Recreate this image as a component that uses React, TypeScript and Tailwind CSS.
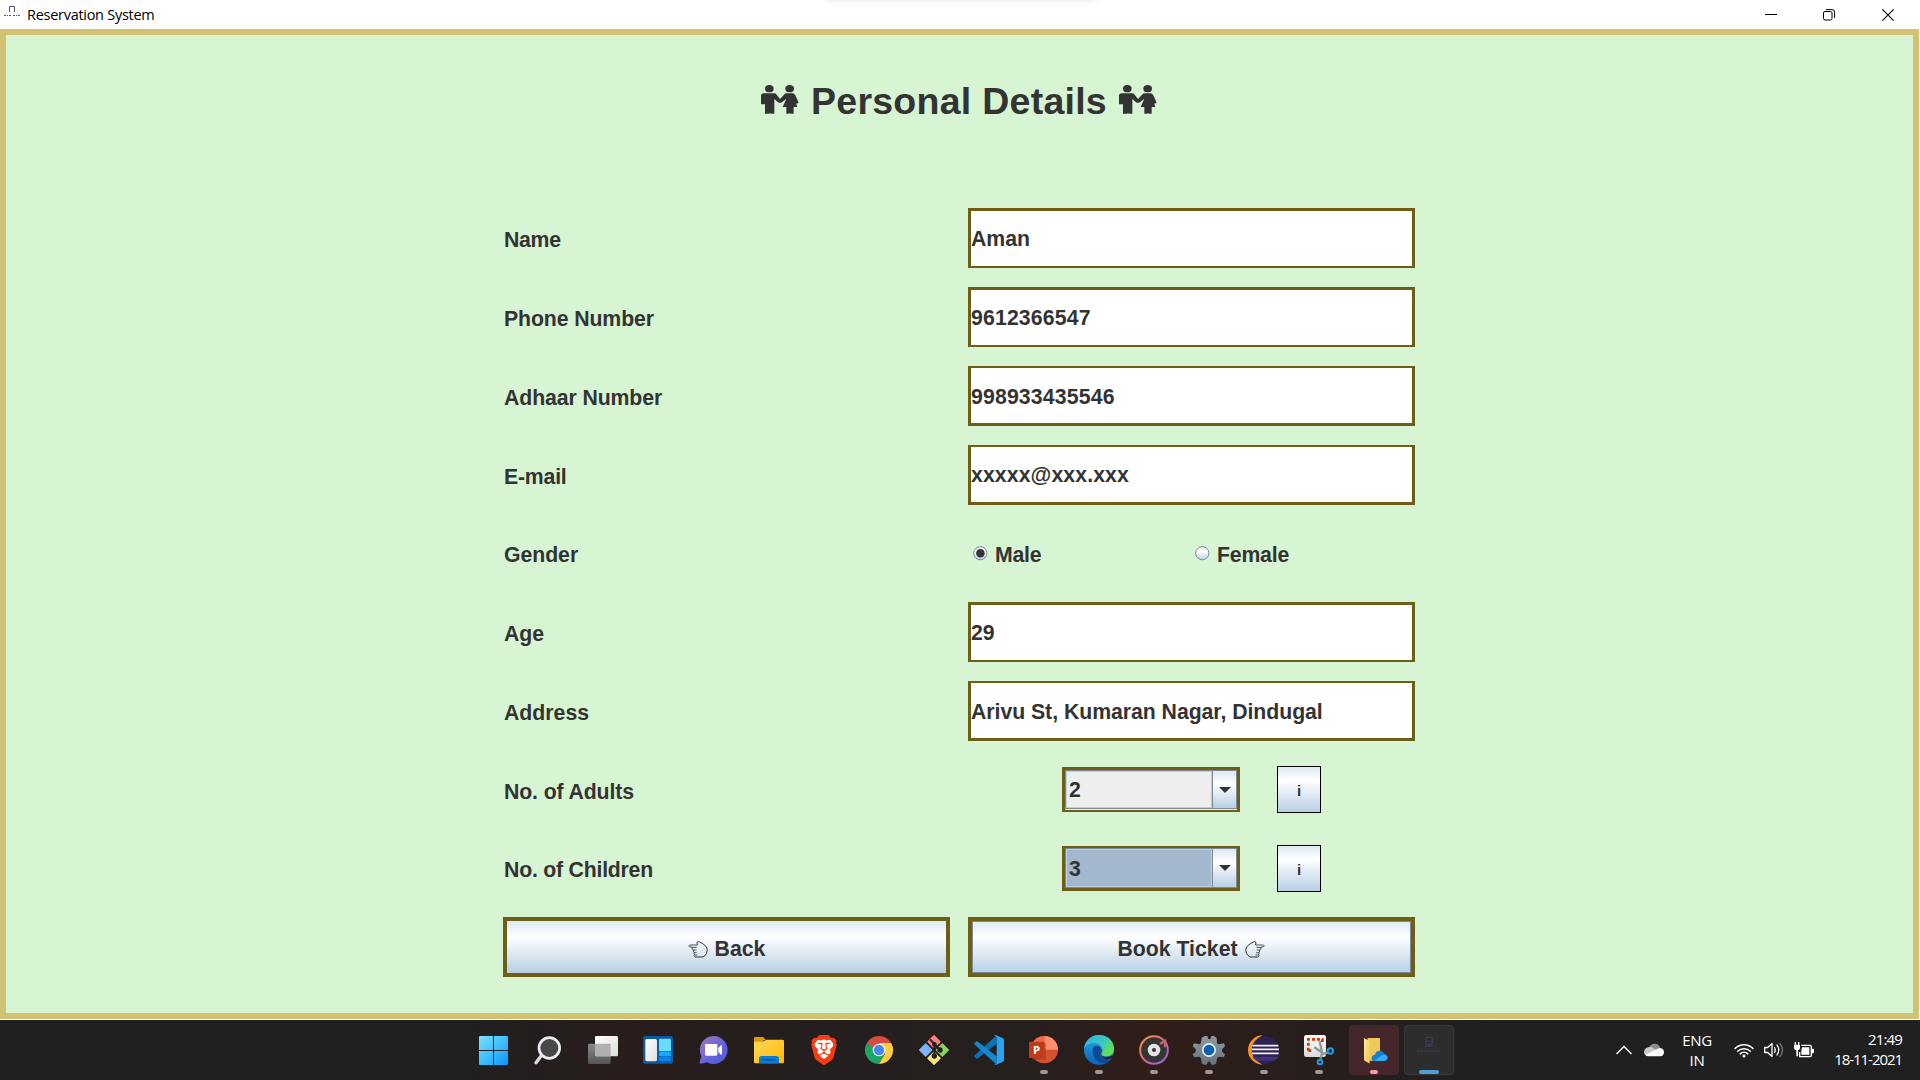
import type { ReactNode } from "react";
import { SiBrave } from "react-icons/si";

const labelCls = "text-[21.25px] leading-[24px] font-bold text-[#333333]";

function Couple() {
  return (
    <svg className="h-[30px] w-[38px] shrink-0" viewBox="0 0 114 90" fill="#333333">
      <ellipse cx="25" cy="11" rx="13" ry="11" />
      <ellipse cx="86" cy="11" rx="13" ry="11" />
      <path d="M8 25h32q4 0 7 4l10 13 12-13q4-4 8-4h18q5 0 8 6l10 22-6 3-2-2 4 12H98v20H89l-2-3-2 3H76V66H65l11-25-13 11q-6 3-12 0l-11-10V86H29l-2-3-2 3H12V58H0V33q0-8 8-8z" />
    </svg>
  );
}

function Hand({ flip = false }: { flip?: boolean }) {
  return (
    <svg className={flip ? "h-[17px] w-[20px] shrink-0 -scale-x-100" : "h-[17px] w-[20px] shrink-0"} viewBox="0 0 60 51" fill="none" stroke="#333333" strokeWidth="3">
      <path d="M28 12H5q-4 2-1 5l8 2h14" strokeWidth="2.5" />
      <path d="M28 12l-1-8q3-4 8-1l9 5q9 5 13 13 2 8-2 17-3 6-10 10H22q-4-1-4-5" />
      <path d="M12 19q0 8 4 8h9M16 27q-1 8 4 8h6M18 35q-1 7 4 7h6" strokeWidth="2.5" />
    </svg>
  );
}

function Row({ label, track, h = "h-[60px]", children }: { label: string; track: string; h?: string; children: ReactNode }) {
  return (
    <div className={`grid grid-cols-[447px_447px] gap-[18px] ${h}`}>
      <div className={`pl-px ${labelCls} ${track}`}>{label}</div>
      {children}
    </div>
  );
}

function Field({ value, look }: { value: string; look: string }) {
  return <div className={`border-x-[3px] border-[#6f5e16] bg-white ${labelCls} ${look}`}>{value}</div>;
}

function Radio({ label, on = false }: { label: string; on?: boolean }) {
  return (
    <div className="flex items-center pt-[3px] pl-[5px]">
      <svg className="-mt-[4px] mr-[7px] h-[15px] w-[15px]" viewBox="0 0 15 15">
        <defs>
          <linearGradient id="radio" x1="0" y1="0" x2="0" y2="1">
            <stop offset="0" stopColor="#dde8f3" />
            <stop offset=".35" stopColor="#ffffff" />
            <stop offset="1" stopColor="#b8cfe5" />
          </linearGradient>
        </defs>
        <circle cx="7.3" cy="7.2" r="6.6" fill="url(#radio)" stroke="#7a8a99" />
        {on && <circle cx="7.4" cy="7.2" r="4.3" fill="#333333" />}
      </svg>
      <span className={`tracking-[-0.2px] ${labelCls}`}>{label}</span>
    </div>
  );
}

function Combo({ value, focused = false }: { value: string; focused?: boolean }) {
  return (
    <div className="grid grid-cols-[94px_178px_37px_44px] items-start">
      <span />
      <div className={`mt-[7px] flex h-[45px] border-x-[3px] border-[#6f5e16] bg-[#e8eef4] ${focused ? "border-t-2 border-b-[3px]" : "border-t-[3px] border-b-2"}`}>
        <div className={`flex flex-1 border border-[#7a8a99] ${focused ? "" : "mb-px"}`}>
          <div className={`flex flex-1 items-center border border-[#b8cfe5] pl-[2px] ${labelCls} ${focused ? "bg-[#a3b8cc] pt-[2px]" : "bg-[#eeeeee] pt-px"}`}>{value}</div>
          <div className="flex w-[24px] items-center justify-center border-l border-[#7a8a99] bg-[linear-gradient(#dde8f3,#ffffff_35%,#b8cfe5)] pl-px">
            <svg className="h-[6px] w-[12px]" viewBox="0 0 12 6"><path d="M0 0h12L6 6z" fill="#333333" /></svg>
          </div>
        </div>
      </div>
      <span />
      <div className="mt-[6px] flex h-[47px] items-center justify-center border border-black bg-[linear-gradient(#dde8f3,#ffffff_30%,#b8cfe5)] pt-[3px] text-[15px] font-bold text-[#333333]">i</div>
    </div>
  );
}

/* Taskbar icons share a 165 x 180 grid that covers one 55 x 60 slot. */
function Slot({ children, run }: { children?: ReactNode; run?: "gray" | "pink" | "blue" }) {
  return (
    <svg className="h-[60px] w-[55px] shrink-0" viewBox="0 0 165 180">
      {run === "pink" && <rect x="9" y="15" width="150" height="150" rx="12" fill="#44272a" />}
      {run === "blue" && <rect x="10" y="16" width="148" height="148" rx="12" fill="#2d2d2d" stroke="#3a3a3a" strokeWidth="3" />}
      {children}
      {run === "gray" && <rect x="72" y="150" width="24" height="12" rx="6" fill="#9d9898" />}
      {run === "pink" && <rect x="72" y="150" width="24" height="12" rx="6" fill="#ff99a4" />}
      {run === "blue" && <rect x="54" y="150" width="60" height="12" rx="6" fill="#4ba0d8" />}
    </svg>
  );
}

function Gradient({ id, a, b, c, flat = false }: { id: string; a: string; b: string; c?: string; flat?: boolean }) {
  return (
    <linearGradient id={id} x1="0" y1="0" x2={flat ? "0" : "1"} y2="1">
      <stop offset="0" stopColor={a} />
      {c && <stop offset=".5" stopColor={c} />}
      <stop offset="1" stopColor={b} />
    </linearGradient>
  );
}

function TaskIcons() {
  return (
    <div className="flex">
      <Slot>
        <Gradient id="win" a="#7fe0ff" b="#0a94fb" c="#3fc0fb" />
        <g fill="url(#win)">
          <path d="M42 48H81V90H39V51q0-3 3-3zM84 48h39q3 0 3 3V90H84zM39 93H81v42H42q-3 0-3-3zM84 93h42v39q0 3-3 3H84z" />
        </g>
      </Slot>
      <Slot>
        <path d="M62 106L45 128" stroke="#d8dcdf" strokeWidth="10" strokeLinecap="round" />
        <circle cx="85" cy="84" r="31" fill="#47484a" stroke="#eceef0" strokeWidth="8" />
      </Slot>
      <Slot>
        <Gradient id="tv" a="#8a8a8a" b="#555555" flat />
        <Gradient id="tw" a="#ffffff" b="#dcdcdc" />
        <rect x="36" y="71" width="68" height="61" rx="4" fill="url(#tv)" />
        <rect x="57" y="48" width="69" height="61" rx="4" fill="url(#tw)" />
        <path d="M57 71h47v38H61q-4 0-4-4z" fill="#b0b0b0" />
      </Slot>
      <Slot>
        <Gradient id="wg" a="#ffffff" b="#dcdfe3" />
        <rect x="36" y="48" width="90" height="83" rx="5" fill="#0a5aa6" />
        <rect x="43" y="57" width="35" height="67" rx="5" fill="url(#wg)" />
        <rect x="84" y="56" width="36" height="38" rx="3" fill="#69dcff" />
        <rect x="84" y="95" width="36" height="14" rx="3" fill="#1fa4ff" />
        <rect x="84" y="110" width="36" height="14" rx="3" fill="#0783ec" />
      </Slot>
      <Slot>
        <Gradient id="ch" a="#a878b8" b="#4a58d8" c="#6a66d8" />
        <path d="M83 48a42 42 0 1 1-20 79l-18 4q-5 0-4-5l5-17A42 42 0 0 1 83 48z" fill="url(#ch)" />
        <rect x="57" y="72" width="37" height="35" rx="4" fill="#fff" />
        <path d="M97 84l8-8q3-1 3 2v24q0 3-3 2l-8-8z" fill="#fff" />
      </Slot>
      <Slot>
        <Gradient id="fe" a="#ffd75e" b="#ffb900" />
        <path d="M39 54q0-3 4-3h23l9 9h-6L60 70H39z" fill="#e09a00" />
        <path d="M39 65h26l11-6h49q4 0 4 4v64q0 3-4 3H43q-4 0-4-3z" fill="url(#fe)" />
        <path d="M54 130v-14q0-8 8-8h44q8 0 8 8v14z" fill="#0c7bd0" />
        <rect x="64" y="117" width="40" height="4" fill="#084e96" />
      </Slot>
      <Slot>
        <path d="M66 56h36l11 16-7 38-22 15-22-15-7-38z" fill="#fff" />
        <g transform="translate(39 45)"><SiBrave size={90} color="#fb3c10" /></g>
      </Slot>
      <Slot>
        <path d="M47.600 69L66 101 84 90 84 69z" fill="#1fa463" />
        <path d="M47.600 69A42 42 0 0 0 84 132L102 100 84 90z" fill="#1fa463" />
        <path d="M84 69h36.400A42 42 0 0 1 84 132l18-31z" fill="#ffcd40" />
        <path d="M47.600 69A42 42 0 0 1 120.400 69H84L66 84z" fill="#d84c40" />
        <circle cx="84" cy="90" r="19" fill="#f5f5f5" />
        <circle cx="84" cy="90" r="15.500" fill="#4587f3" />
      </Slot>
      <Slot>
        <g strokeLinejoin="round" strokeWidth="4">
          <path d="M84 47l18 18-18 18-18-18z" fill="#ff7c80" stroke="#ff7c80" />
          <path d="M59 72l18 18-18 18-18-18z" fill="#80b3ff" stroke="#80b3ff" />
          <path d="M109 72l18 18-18 18-18-18z" fill="#8dd35f" stroke="#8dd35f" />
          <path d="M84 97l18 18-18 18-18-18z" fill="#ffe680" stroke="#ffe680" />
        </g>
        <path d="M72 58l13 14v40M85 72l17 18" stroke="#241f1e" strokeWidth="6" fill="none" />
        <circle cx="85" cy="73" r="7" fill="#241f1e" />
        <circle cx="102" cy="90" r="8" fill="#241f1e" />
        <circle cx="85" cy="108" r="8" fill="#241f1e" />
      </Slot>
      <Slot>
        <path d="M107 46L39 108l6 7q3 2 6 0L107 71z" fill="#0872b9" />
        <path d="M107 134L39 72l6-7q3-2 6 0l56 44z" fill="#1587cf" />
        <path d="M104 45l22 10q3 2 3 5v60q0 3-3 5l-22 10q-3 0-4-3 7 2 7-4V52q0-5-7-4 1-3 4-3z" fill="#29a3f0" />
      </Slot>
      <Slot run="gray">
        <circle cx="85" cy="89" r="41" fill="#d35230" />
        <path d="M85 48a41 41 0 0 1 41 41H85z" fill="#ff8f6b" />
        <path d="M85 48a41 41 0 0 0-41 41h41z" fill="#ed6c47" />
        <rect x="48" y="69" width="42" height="51" rx="4" fill="#9e351b" opacity=".5" />
        <rect x="39" y="65" width="46" height="49" rx="4" fill="#c13b1b" />
        <text x="61.500" y="102" textAnchor="middle" className="fill-white font-['Open_Sans'] text-[34px] font-bold">P</text>
      </Slot>
      <Slot run="gray">
        <Gradient id="ed" a="#2aa8dc" b="#0b5fc0" flat />
        <linearGradient id="eg" x1="0" y1="0" x2="1" y2=".5">
          <stop offset=".2" stopColor="#31b8e0" />
          <stop offset=".65" stopColor="#3cc8c0" />
          <stop offset="1" stopColor="#62e050" />
        </linearGradient>
        <circle cx="84" cy="90" r="45" fill="url(#ed)" />
        <path d="M39 88C41 62 60 45 84 45c28 0 45 20 45 41 0 14-10 23-24 23-12 0-16-5-13-9 8-12-2-30-20-31-16 0-28 8-33 19z" fill="url(#eg)" />
        <path d="M66 84c-6 22 8 47 38 45 8-2 15-7 19-13-18 8-36 0-36-16-1-6 3-8 3-12-2-12-19-14-24-4z" fill="#0d4a94" />
        <path d="M90 99c1-4 4-7 3-13-3 4-5 8-5 15 3 15 20 20 35 14 3-2 5-6 3-9-5 3-13 5-21 5-11 0-17-6-15-12z" fill="#231f1f" />
      </Slot>
      <Slot run="gray">
        <Gradient id="gr" a="#ff9a3c" b="#7b68ee" c="#d8688a" />
        <circle cx="84" cy="90" r="41.500" fill="#343434" stroke="url(#gr)" strokeWidth="6" />
        <path d="M102 72l15-10v20" stroke="#c06a70" strokeWidth="7" fill="none" />
        <path d="M113 56l12-6" stroke="#35201b" strokeWidth="5" />
        <circle cx="84" cy="90" r="19" fill="#e4e4e4" />
        <circle cx="84" cy="90" r="6" fill="#343434" />
      </Slot>
      <Slot run="gray">
        <Gradient id="se" a="#8c98a3" b="#68737d" flat />
        <path d="M71 48h8l3 9h6l3-9h8l8 5 1 16 5 4 16-3 3 9-9 9v7l9 8-3 9-16-2-5 4-2 16-7 4h-8l-4-9h-6l-4 9h-8l-7-4-2-16-5-4-16 2-4-9 9-8v-7l-9-9 4-9 16 3 5-4 2-16z" fill="url(#se)" />
        <circle cx="84" cy="90" r="18.500" fill="#0862ae" stroke="#e7edf2" strokeWidth="5" />
      </Slot>
      <Slot run="gray">
        <path d="M80 46A44 44 0 0 0 80 134 49 49 0 0 1 80 46z" fill="#f7941e" />
        <circle cx="88" cy="90" r="41" fill="#2c2255" />
        <path d="M49 110h78q-5 9-12 12H62q-8-5-13-12z" fill="#3d3578" />
        <path d="M49 77h78M47 88h82M48 100h80" stroke="#f3f0fa" strokeWidth="5" />
      </Slot>
      <Slot run="gray">
        <Gradient id="sn" a="#ffffff" b="#d8dbdd" flat />
        <rect x="39" y="45" width="66" height="66" rx="7" fill="url(#sn)" />
        <path d="M52 92V58h42v10M52 92h12" stroke="#d83b01" strokeWidth="8" strokeDasharray="9 6" fill="none" />
        <path d="M86 64l8 38 20-4M88 116l6-18-24-16" fill="none" stroke="#8b979f" strokeWidth="7" />
        <circle cx="118" cy="93" r="8" fill="none" stroke="#1f9ee8" strokeWidth="6" />
        <circle cx="87" cy="126" r="7" fill="none" stroke="#1f9ee8" strokeWidth="6" />
      </Slot>
      <Slot run="pink">
        <Gradient id="fo" a="#ffe9a0" b="#f3c64f" />
        <rect x="64" y="54" width="38" height="68" rx="2" fill="#eec75a" />
        <path d="M54 54l17 10v65q-1 2-4 0l-13-8z" fill="url(#fo)" />
        <path d="M86 123q-10-1-9-10 1-8 10-9 3-12 14-12 10 0 13 10 11 1 11 11-1 10-11 10z" fill="#0f7fd8" />
        <path d="M85 122l24-17q6-3 10 0 7 4 5 10-2 8-10 8z" fill="#37aef4" />
      </Slot>
      <Slot run="blue">
        <g fill="none" stroke="#38425f" strokeWidth="3">
          <rect x="74" y="52" width="20" height="21" rx="4" />
          <path d="M74 63h20M76 74l-5 7M92 74l5 7M74 78h20" />
        </g>
        <path d="M48 92h72" stroke="#38425f" strokeWidth="6" strokeDasharray="5 2 4 1 6 3" opacity=".6" />
      </Slot>
    </div>
  );
}

function Tray() {
  return (
    <div className="flex h-[60px] items-center text-[15px] leading-[20px] text-white">
      <svg className="mr-[12px] h-[10px] w-[16px]" viewBox="0 0 16 10" fill="none" stroke="#fff" strokeWidth="1.3"><path d="M.5 9L8 1.500 15.500 9" /></svg>
      <svg className="mr-[19px] h-[14px] w-[20px]" viewBox="0 0 60 40">
        <path d="M14 13q6-12 18-12 13 0 17 13L25 24z" fill="#8b8b8b" />
        <path d="M13 12q8-3 15 2l20 12-20 12H12Q0 37 0 26q1-12 13-14z" fill="#c8c8c8" />
        <path d="M4 34l32-15q5-5 13-5 11 2 11 13-1 12-11 12H12q-6-1-8-5z" fill="#fff" />
      </svg>
      <div className="mr-[23px] w-[28px] text-center tracking-[-0.3px]"><div className="-mx-1">ENG</div><div>IN</div></div>
      <svg className="mr-[10px] h-[15px] w-[20px]" viewBox="0 0 20 15" fill="none" stroke="#fff" strokeWidth="1.500" strokeLinecap="round">
        <path d="M1 5.500a12.700 12.700 0 0 1 18 0M3.700 8.200a9 9 0 0 1 12.600 0M6.300 10.900a5.200 5.200 0 0 1 7.400 0" />
        <circle cx="10" cy="13" r="1.500" fill="#fff" stroke="none" />
      </svg>
      <svg className="mr-[10px] h-[16px] w-[20px]" viewBox="0 0 20 16" fill="none" stroke="#fff" strokeWidth="1.300" strokeLinejoin="round" strokeLinecap="round">
        <path d="M.7 5.500h3L8 1.500v13L3.700 10.500h-3zM10.500 5.500q1.500 2.500 0 5M13 3q3.500 5 0 10" />
        <path d="M16 1.500q5 6.500 0 13" stroke="#777" />
      </svg>
      <svg className="mr-[20px] h-[16px] w-[20px]" viewBox="0 0 60 48">
        <path d="M4 0v8M14 0v8" stroke="#fff" strokeWidth="4" />
        <path d="M0 8h18v10q0 6-6 7v18H7V25q-7-2-7-7z" fill="#fff" />
        <path d="M22 10h26q4 0 4 4v26q0 4-4 4H17V30" fill="none" stroke="#fff" strokeWidth="4" />
        <path d="M24 16h22v22H22V26z" fill="#fff" />
        <path d="M53 20h4q3 0 3 4v6q0 4-3 4h-4z" fill="#fff" />
      </svg>
      <div className="-mt-[2px] w-[68px] text-right whitespace-nowrap"><div className="tracking-[-0.85px]">21:49</div><div className="-ml-6 tracking-[-1.05px]">18-11-2021</div></div>
    </div>
  );
}

const button = "flex items-center justify-center gap-[7px] border-4 border-[#6f5e16] bg-[linear-gradient(#dde8f3,#ffffff_30%,#b8cfe5)] pt-[4px]";

export default function App() {
  return (
    <div className="relative flex h-[1080px] w-[1920px] flex-col overflow-hidden bg-white font-['Liberation_Sans',sans-serif]">
      <div className="absolute -top-[10px] left-[825px] h-[10px] w-[272px] rounded-lg shadow-[0_0_7px_1px_rgba(0,0,0,0.08)]" />
      <header className="flex h-[29px] items-center justify-between font-['Open_Sans',sans-serif]">
        <div className="flex items-center">
          <svg className="mt-[-5px] ml-[4px] h-[12px] w-[16px]" viewBox="0 0 16 12" fill="none" stroke="#4a5078">
            <path d="M5.500 6V.5M5.500 .5h5M10.500 .5V6" />
            <path d="M0 9.500h16" strokeDasharray="2 1 1 1 2 2" />
          </svg>
          <span className="ml-[7px] text-[14.500px] tracking-[-0.28px] text-black">Reservation System</span>
        </div>
        <svg className="mr-[26px] h-[12px] w-[129px]" viewBox="0 0 129 12" fill="none" stroke="#000">
          <path d="M0 5.500h12" />
          <rect x="58.500" y="2.500" width="8.500" height="8.500" rx="1.500" />
          <path d="M61 .6h6q2.600 0 2.600 2.600V9" />
          <path d="M117.400 .4l11.200 11.200M128.600 .4l-11.200 11.200" strokeWidth="1.100" />
        </svg>
      </header>

      <main className="mr-px mb-px flex h-[990px] flex-col items-center border-6 border-[#d4c273] bg-[#d8f5d3]">
        <h1 className="mt-[40px] flex h-[50px] items-center gap-[12px] pr-px text-[37.500px] leading-none font-bold text-[#333333]">
          <Couple />
          <span className="pt-[3px] tracking-[0.26px]">Personal Details</span>
          <Couple />
        </h1>
        <div className="mt-[83px] flex flex-col gap-[19px] pr-px">
          <Row label="Name" track="pt-[20px] tracking-[-0.3px]"><Field value="Aman" look="border-t-[3px] border-b-2 pt-[16px]" /></Row>
          <Row label="Phone Number" track="pt-[20px] tracking-[-0.1px]"><Field value="9612366547" look="border-t-[3px] border-b-2 pt-[16px] tracking-[0.15px]" /></Row>
          <Row label="Adhaar Number" track="pt-[20px] tracking-[-0.1px]"><Field value="998933435546" look="border-t-2 border-b-[3px] pt-[17px] tracking-[0.15px]" /></Row>
          <Row label="E-mail" track="pt-[20px] tracking-[-0.2px]"><Field value="xxxxx@xxx.xxx" look="border-t-2 border-b-[3px] pt-[16px] tracking-[0.1px]" /></Row>
          <Row label="Gender" track="pt-[19px] tracking-[-0.05px]" h="h-[59px]">
            <div className="grid grid-cols-[222px_1fr]"><Radio label="Male" on /><Radio label="Female" /></div>
          </Row>
          <Row label="Age" track="pt-[20px] tracking-[-0.1px]"><Field value="29" look="border-t-[3px] border-b-2 pt-[16px]" /></Row>
          <Row label="Address" track="pt-[20px] tracking-normal"><Field value="Arivu St, Kumaran Nagar, Dindugal" look="border-t-2 border-b-[3px] pt-[17px] tracking-[-0.04px]" /></Row>
          <Row label="No. of Adults" track="pt-[20px] tracking-[-0.12px]"><Combo value="2" /></Row>
          <Row label="No. of Children" track="pt-[19px] tracking-[-0.22px]" h="h-[59px]"><Combo value="3" focused /></Row>
          <div className="grid h-[60px] grid-cols-[447px_447px] gap-[18px]">
            <div className={`${button} ${labelCls}`}><Hand />Back</div>
            <div className={`${button} ${labelCls} pr-px shadow-[inset_0_0_0_1px_#7a8a99]`}>Book Ticket<Hand flip /></div>
          </div>
        </div>
      </main>

      <footer className="grid h-[60px] grid-cols-[466px_990px_1fr] items-center bg-[linear-gradient(90deg,#202020_0,#202020_24%,#281d1b_33%,#241f1e_42%,#261f1e_54%,#301d19_60%,#2a1e1b_65%,#202020_78%)] font-['Open_Sans',sans-serif]">
        <span />
        <TaskIcons />
        <div className="flex justify-end pr-[18px]"><Tray /></div>
      </footer>
    </div>
  );
}
